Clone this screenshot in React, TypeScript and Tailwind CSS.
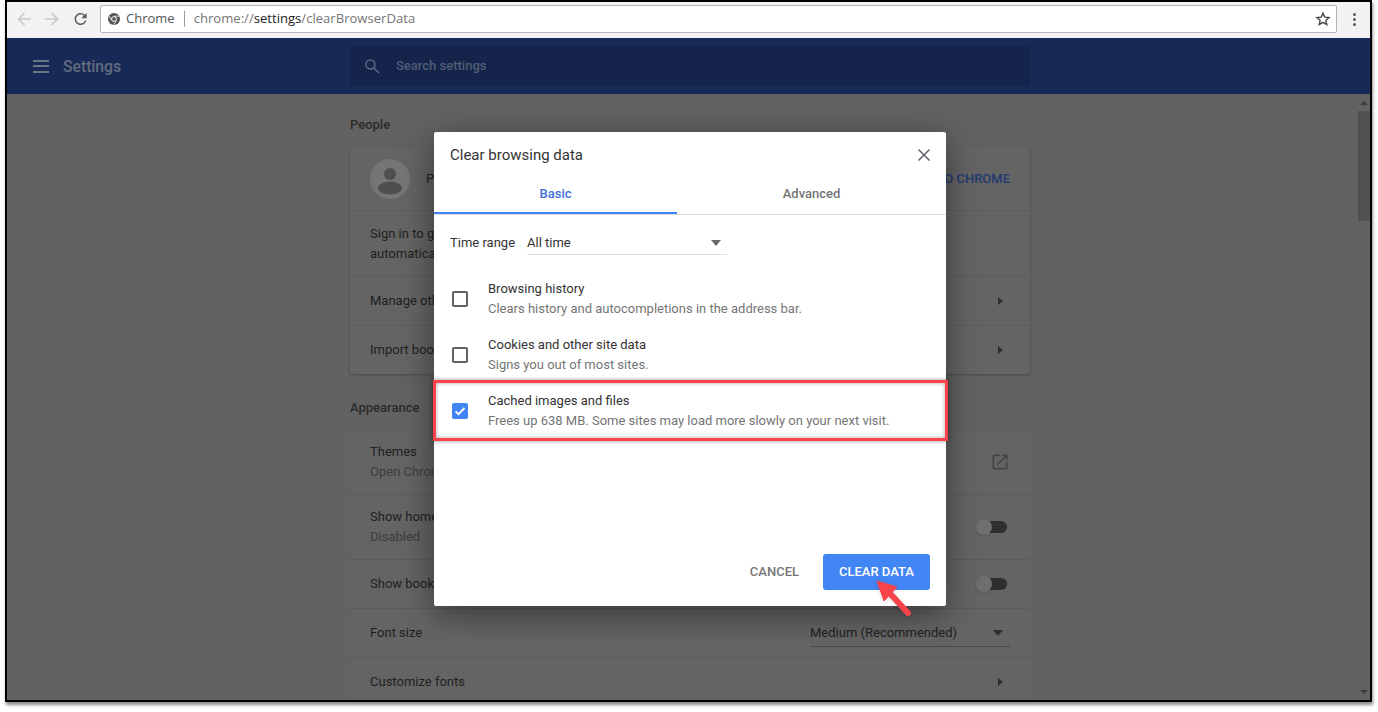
import React from "react";

const roboto = { fontFamily: "Roboto, 'Liberation Sans', sans-serif" };

function RightArrow() {
  return <div className="w-0 h-0 border-y-[4px] border-y-transparent border-l-[5px] border-l-[#2e2e2e] mr-[7px]" />;
}

function DownArrow({ color }: { color: string }) {
  return (
    <svg width="12" height="6" viewBox="0 0 12 6">
      <path d="M1 0h10L6 6z" fill={color} />
    </svg>
  );
}

function Toggle() {
  return (
    <div className="relative w-[31px] h-[16px] flex items-center justify-end">
      <div className="w-[24px] h-[12px] rounded-full bg-[#2f2f2f]" />
      <div className="absolute left-0 top-0 w-[16px] h-[16px] rounded-full bg-[#6f6f6f] shadow" />
    </div>
  );
}

function Clip({ children }: { children: React.ReactNode }) {
  return <div className="w-[64px] overflow-hidden whitespace-nowrap">{children}</div>;
}

function Row({
  h,
  children,
  last,
}: {
  h: string;
  children: React.ReactNode;
  last?: boolean;
}) {
  return (
    <div className={`${h} shrink-0 flex items-center justify-between pl-5 pr-5 ${last ? "" : "border-b border-[#5c5c5c]"}`}>
      {children}
    </div>
  );
}

function CheckRow({ title, sub, checked }: { title: string; sub: string; checked?: boolean }) {
  return (
    <div className="h-[56px] flex items-center">
      <div className="w-[54px] pl-[18px] shrink-0">
        {checked ? (
          <div className="w-[16px] h-[16px] rounded-[2px] bg-[#4285f4] flex items-center justify-center">
            <svg width="12" height="12" viewBox="0 0 12 12">
              <path d="M1.6 6.3l2.9 2.9 6-6.2" fill="none" stroke="#fff" strokeWidth="1.9" />
            </svg>
          </div>
        ) : (
          <div className="w-[16px] h-[16px] rounded-[2px] border-2 border-[#5f6368]" />
        )}
      </div>
      <div className="text-[13px] leading-[20px]">
        <div className="text-[#333]">{title}</div>
        <div className="text-[#757575]">{sub}</div>
      </div>
    </div>
  );
}

export default function App() {
  return (
    <div className="w-[1378px] h-[712px] bg-white overflow-hidden pl-[5px]" style={roboto}>
      <div className="relative w-[1367px] h-[702px] border-2 border-t-2 border-black flex flex-col shadow-[1px_3px_3px_rgba(0,0,0,0.45)]">
        {/* Toolbar */}
        <div className="h-[36px] shrink-0 bg-[#f2f2f2] flex items-start pt-[3px]">
          <div className="w-[93px] h-[28px] shrink-0 flex items-center pl-[9px] gap-[12px]">
            <svg width="16" height="16" viewBox="0 0 16 16" className="shrink-0">
              <path d="M15 8H2.5M8.5 2L2.5 8l6 6" fill="none" stroke="#c9c9c9" strokeWidth="1.7" />
            </svg>
            <svg width="16" height="16" viewBox="0 0 16 16" className="shrink-0">
              <path d="M1 8h12.5M7.5 2l6 6-6 6" fill="none" stroke="#c9c9c9" strokeWidth="1.7" />
            </svg>
            <svg width="16" height="16" viewBox="0 0 24 24" className="shrink-0">
              <path
                transform="translate(-0.6 -1.6) scale(1.13)"
                d="M17.65 6.35A7.958 7.958 0 0 0 12 4c-4.42 0-7.99 3.58-7.99 8s3.57 8 7.99 8c3.73 0 6.84-2.55 7.73-6h-2.08A5.99 5.99 0 0 1 12 18c-3.31 0-6-2.69-6-6s2.69-6 6-6c1.66 0 3.14.69 4.22 1.78L13 11h7V4l-2.35 2.35z"
                fill="#5a5a5a"
              />
            </svg>
          </div>
          <div
            className="w-[1237px] h-[28px] shrink-0 bg-white border border-[#b4b4b4] rounded-[2px] flex items-center pl-[7px] pr-[5px]"
            style={{ fontFamily: "'Open Sans', sans-serif" }}
          >
            <svg width="12" height="12" viewBox="0 0 12 12" className="shrink-0">
              <circle cx="6" cy="6" r="6" fill="#555" />
              <circle cx="6" cy="6" r="2.4" fill="#555" stroke="#fff" strokeWidth="1" />
              <path d="M6 3.2h5M3.6 7.4L1.3 3M8.4 7.4L5.7 11.9" stroke="#f2f2f2" strokeWidth="0.8" fill="none" />
            </svg>
            <span className="ml-[6px] text-[#555] text-[13px]">Chrome</span>
            <div className="w-px h-[16px] bg-[#9a9a9a] ml-[9px] mr-[9px]" />
            <span className="text-[#757575] text-[13.1px]">
              chrome://<span className="text-[#222]">settings</span>/clearBrowserData
            </span>
            <svg width="16" height="16" viewBox="0 0 24 24" className="ml-auto shrink-0">
              <path
                d="M12 3.2l2.6 6 6.5.6-4.9 4.3 1.5 6.4L12 17.1l-5.7 3.4 1.5-6.4-4.9-4.3 6.5-.6z"
                fill="none"
                stroke="#444"
                strokeWidth="2"
              />
            </svg>
          </div>
          <div className="flex-1 h-[28px] pl-[2px] flex flex-col items-center justify-center gap-[2px]">
            <div className="w-[3px] h-[3px] rounded-full bg-[#5a5a5a]" />
            <div className="w-[3px] h-[3px] rounded-full bg-[#5a5a5a]" />
            <div className="w-[3px] h-[3px] rounded-full bg-[#5a5a5a]" />
          </div>
        </div>

        {/* Blue header */}
        <div className="h-[56px] shrink-0 bg-[#172a57] flex items-center">
          <div className="w-[343px] shrink-0 flex items-center pl-[26px] gap-[14px]">
            <div className="w-[16px] flex flex-col gap-[3.5px]">
              <div className="h-[2px] bg-[#6c7487]" />
              <div className="h-[2px] bg-[#6c7487]" />
              <div className="h-[2px] bg-[#6c7487]" />
            </div>
            <span className="text-[15.7px] font-medium text-[#636b7f] leading-[20px] pt-[1px]">Settings</span>
          </div>
          <div className="w-[680px] h-[40px] bg-[#14244a] rounded-[2px] flex items-center pl-[14px] gap-[16px]">
            <svg width="16" height="16" viewBox="0 0 16 16">
              <circle cx="6.5" cy="6.5" r="4.5" fill="none" stroke="#5f6a82" strokeWidth="1.5" />
              <path d="M10 10l5 5" stroke="#5f6a82" strokeWidth="1.6" />
            </svg>
            <span className="text-[13px] font-medium text-[#535d76]">Search settings</span>
          </div>
        </div>

        {/* Body */}
        <div className="flex-1 min-h-0 bg-[#626262] flex overflow-hidden">
          <div className="w-[1351px] shrink-0 pl-[343px] overflow-hidden">
            <div className="w-[680px] text-[13px] text-[#1f1f1f]">
              <div className="h-[54px] flex items-end pb-[14px] font-medium text-[#2b2b2b]">People</div>
              <div className="bg-[#646464] rounded-[2px] shadow-[0_1px_3px_rgba(0,0,0,0.25)] flex flex-col">
                <Row h="h-[63px]">
                  <div className="flex items-center gap-4">
                    <svg width="40" height="40" viewBox="0 0 40 40">
                      <circle cx="20" cy="20" r="20" fill="#757575" />
                      <circle cx="20" cy="15" r="6" fill="#4f4f4f" />
                      <ellipse cx="20" cy="29" rx="12" ry="6.5" fill="#4f4f4f" />
                    </svg>
                    <span>Person 1</span>
                  </div>
                  <span className="font-medium text-[#223a70]">SIGN IN TO CHROME</span>
                </Row>
                <Row h="h-[66px]">
                  <div className="leading-[20px]">
                    <Clip>Sign in to get your bookmarks</Clip>
                    <Clip>automatically be signed in</Clip>
                  </div>
                </Row>
                <Row h="h-[49px]">
                  <Clip>Manage other people</Clip>
                  <RightArrow />
                </Row>
                <Row h="h-[48px]" last>
                  <Clip>Import bookmarks and settings</Clip>
                  <RightArrow />
                </Row>
              </div>
              <div className="h-[57px] flex items-end pb-[14px] font-medium text-[#2b2b2b]">Appearance</div>
              <div className="bg-[#646464] rounded-[2px] flex flex-col">
                <Row h="h-[64px]">
                  <div className="leading-[20px] pb-[2px]">
                    <div>Themes</div>
                    <Clip>
                      <span className="text-[#3d3d3d]">Open Chrome Web Store</span>
                    </Clip>
                  </div>
                  <svg width="20" height="20" viewBox="0 0 24 24" className="mb-[2px]">
                    <path
                      d="M19 19H5V5h7V3H5c-1.11 0-2 .9-2 2v14c0 1.1.89 2 2 2h14c1.1 0 2-.9 2-2v-7h-2v7zM14 3v2h3.59l-9.83 9.83 1.41 1.41L19 6.41V10h2V3h-7z"
                      fill="#454545"
                    />
                  </svg>
                </Row>
                <Row h="h-[65px]">
                  <div className="leading-[20px]">
                    <Clip>Show home button</Clip>
                    <div className="text-[#3d3d3d]">Disabled</div>
                  </div>
                  <div className="-mr-[-3px]">
                    <Toggle />
                  </div>
                </Row>
                <Row h="h-[49px]">
                  <Clip>Show bookmarks bar</Clip>
                  <div className="-mr-[-3px]">
                    <Toggle />
                  </div>
                </Row>
                <Row h="h-[49px]">
                  <span>Font size</span>
                  <div className="w-[200px] h-[27px] border-b border-[#4a4a4a] flex items-center justify-between pr-[6px]">
                    <span>Medium (Recommended)</span>
                    <DownArrow color="#2e2e2e" />
                  </div>
                </Row>
                <Row h="h-[47px]" last>
                  <span>Customize fonts</span>
                  <RightArrow />
                </Row>
              </div>
            </div>
          </div>
          {/* Scrollbar */}
          <div className="flex-1 flex flex-col items-center relative">
            <div className="h-[17px] flex items-center">
              <div className="w-0 h-0 border-x-[4px] border-x-transparent border-b-[4px] border-b-[#3c3c3c]" />
            </div>
            <div className="w-full h-[110px] bg-[#505050]" />
            <div className="mt-auto h-[17px] flex items-center">
              <div className="w-0 h-0 border-x-[4px] border-x-transparent border-t-[4px] border-t-[#3c3c3c]" />
            </div>
          </div>
        </div>

        {/* Dialog */}
        <div className="absolute left-[427px] top-[130px] w-[512px] h-[474px] bg-white rounded-[2px] shadow-[0_8px_32px_rgba(0,0,0,0.45)] flex flex-col">
          <div className="h-[46px] shrink-0 flex items-center justify-between pl-4 pr-[15px]">
            <span className="text-[15px] text-[#333] leading-[20px]">Clear browsing data</span>
            <svg width="14" height="14" viewBox="0 0 14 14">
              <path d="M1.5 1.5l11 11M12.5 1.5l-11 11" stroke="#5f6368" strokeWidth="1.5" />
            </svg>
          </div>
          <div className="h-[37px] shrink-0 flex border-b border-[#dedede] text-[13px] font-medium">
            <div className="w-[243px] h-[36px] border-b-2 border-[#4285f4] flex items-center justify-center text-[#3f6fd8] pb-[3px]">
              Basic
            </div>
            <div className="flex-1 flex items-center justify-center text-[#757575] pb-[5px]">Advanced</div>
          </div>
          <div className="h-[56px] shrink-0 flex items-center pl-4 text-[13px] text-[#333]">
            <span className="w-[77px] shrink-0">Time range</span>
            <div className="w-[200px] h-[24px] border-b border-[#dedede] flex items-center justify-between pr-[5px]">
              <span>All time</span>
              <DownArrow color="#6b6b6b" />
            </div>
          </div>
          <CheckRow title="Browsing history" sub="Clears history and autocompletions in the address bar." />
          <CheckRow title="Cookies and other site data" sub="Signs you out of most sites." />
          <CheckRow checked title="Cached images and files" sub="Frees up 638 MB. Some sites may load more slowly on your next visit." />
          <div className="mt-auto flex items-center justify-end pr-4 pb-4 gap-[24px] text-[13px] font-medium">
            <span className="text-[#757575]">CANCEL</span>
            <div className="w-[107px] h-[36px] rounded-[3px] bg-[#4285f4] text-white flex items-center justify-center">
              CLEAR DATA
            </div>
          </div>
        </div>

        {/* Red highlight */}
        <div className="absolute left-[426px] top-[378px] w-[515px] h-[61px] border-[3px] border-[#f9434b] shadow-[0_0_4px_rgba(0,0,0,0.45),inset_0_0_4px_rgba(0,0,0,0.35)]" />

        {/* Red arrow */}
        <svg width="50" height="50" viewBox="0 0 50 50" className="absolute left-[863px] top-[574px] drop-shadow-sm">
          <path d="M7 5l7 20 13-14z" fill="#f9434b" stroke="#f9434b" strokeWidth="1" strokeLinejoin="round" />
          <path d="M20.5 18L38 37" stroke="#f9434b" strokeWidth="6" strokeLinecap="round" />
        </svg>
      </div>
    </div>
  );
}
